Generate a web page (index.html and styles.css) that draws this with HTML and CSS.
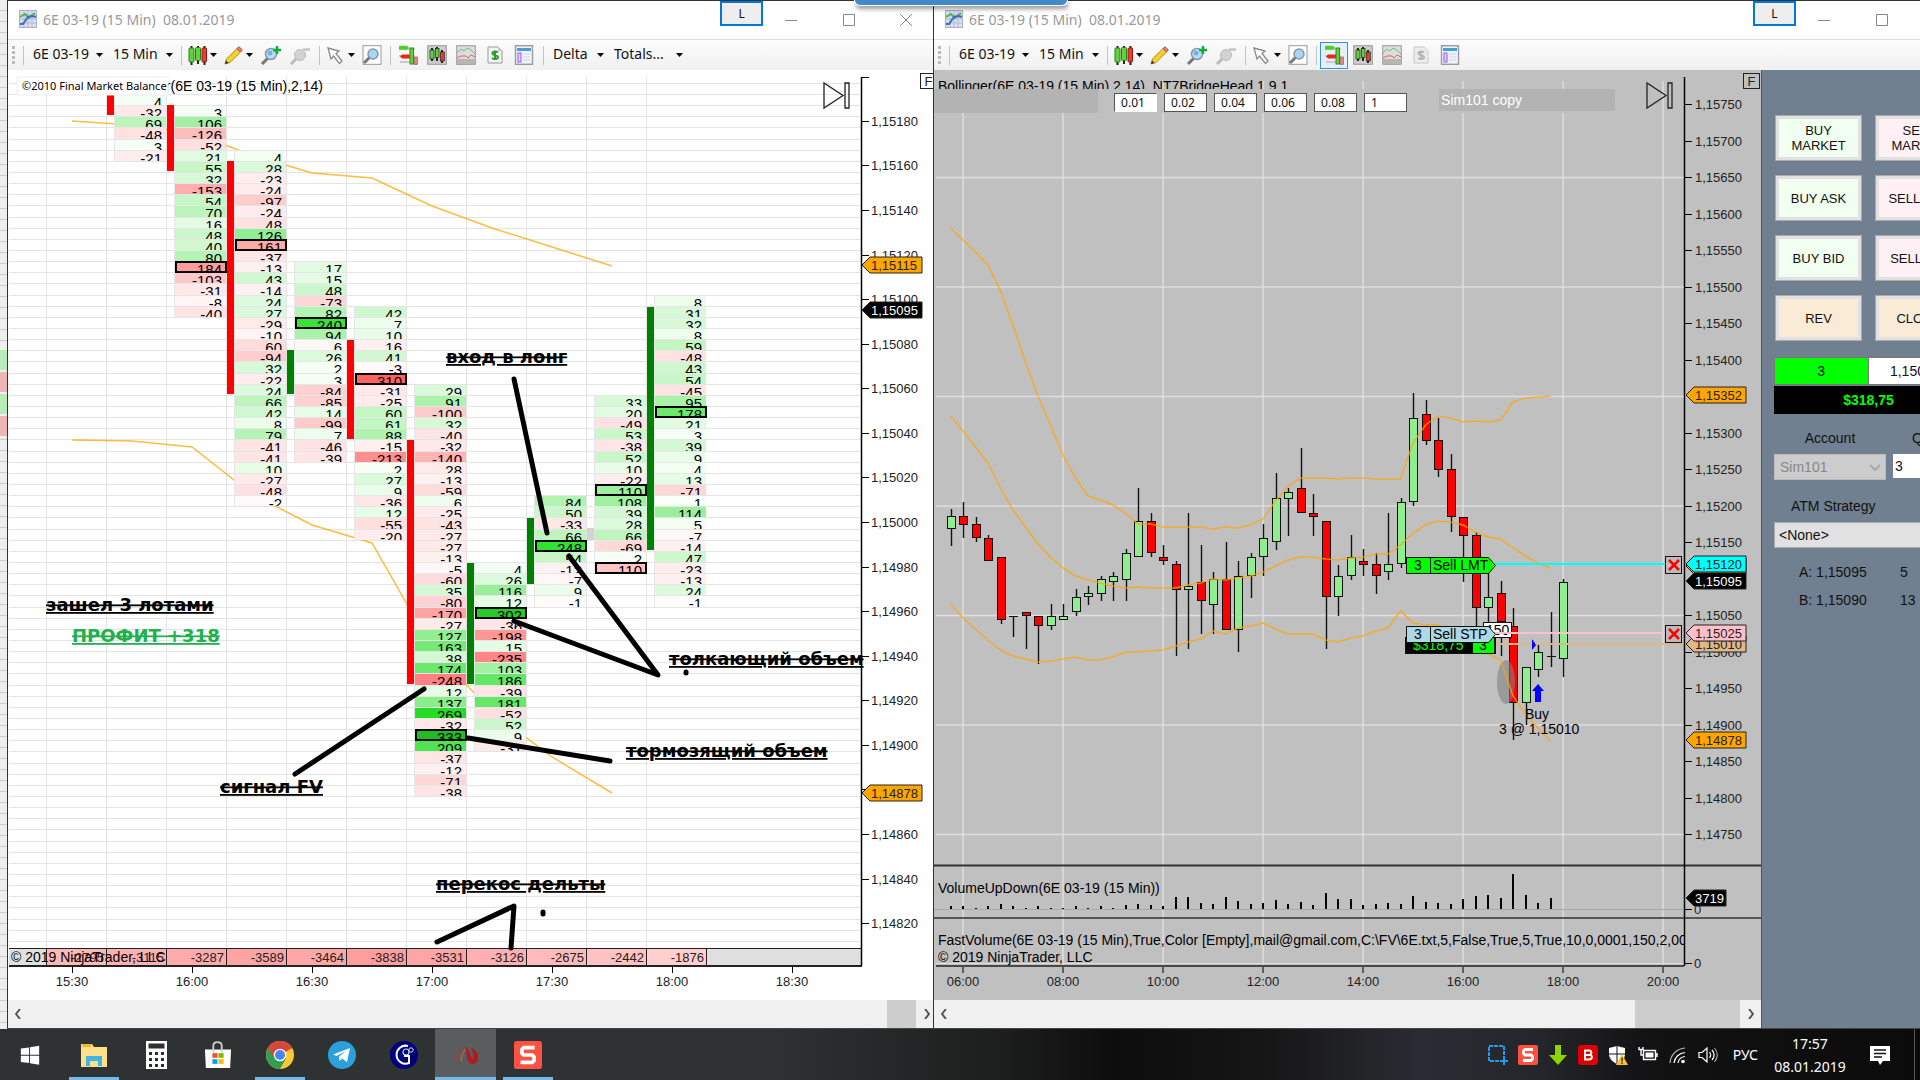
FILE: index.html
```html
<!DOCTYPE html>
<html lang="ru">
<head>
<meta charset="utf-8">
<title>6E 03-19 (15 Min)</title>
<link rel="stylesheet" href="styles.css">
</head>
<body>
<svg class="sprite" aria-hidden="true">
  <symbol id="i-app" viewBox="0 0 18 18"><rect x=".5" y=".5" width="17" height="17" fill="#dcdff0" stroke="#a9aecb"/><path d="M5 1v16M9 1v16M13 1v16M1 5h16M1 9h16M1 13h16" stroke="#b4b9d6"/><path d="M1 7l5-3 4 4 6-5" fill="none" stroke="#4cb848" stroke-width="2"/><path d="M1 14h3l5-7 4-1 4 1" fill="none" stroke="#3b6fc4" stroke-width="2"/></symbol>
  <symbol id="i-caret" viewBox="0 0 7 4"><path d="M0 0h7L3.500 4z" fill="#000"/></symbol>
  <symbol id="i-candles" viewBox="0 0 19 19"><path d="M3.500 0v19M10 0v18M16.500 0v19" stroke="#222" stroke-width="2"/><rect x="1" y="2" width="5" height="14" rx="1" fill="#5fd33a" stroke="#2b7d18"/><rect x="7.500" y="1.500" width="5" height="13" rx="1" fill="#5fd33a" stroke="#2b7d18"/><rect x="14" y="2" width="4.500" height="14" rx="1" fill="#ee3b34" stroke="#8f1712"/></symbol>
  <symbol id="i-pencil" viewBox="0 0 19 19"><path d="M1 18l1.500-5L13 2.500 16.500 6 6 16.500z" fill="#f7cf2e" stroke="#b58711"/><path d="M13 2.500L15 .8l3.300 3L16.500 6z" fill="#ef7d7d" stroke="#b54b4b"/><path d="M1 18l1-3.500L4.500 17z" fill="#333"/></symbol>
  <symbol id="i-lens" viewBox="0 0 22 20"><path d="M2 19l6-6" stroke="#777" stroke-width="3"/><circle cx="11" cy="9" r="5.500" fill="#b9dcf7" stroke="#8797a8" stroke-width="1.500"/><circle cx="10" cy="8" r="2.500" fill="#6fb2ea"/></symbol>
  <symbol id="i-zoomin" viewBox="0 0 22 20"><use href="#i-lens"/><path d="M17 1v8M13 5h8" stroke="#10b030" stroke-width="2.500"/></symbol>
  <symbol id="i-zoomout" viewBox="0 0 22 20"><path d="M2 19l6-6" stroke="#bbb" stroke-width="3"/><circle cx="11" cy="10" r="5.500" fill="#d2d2d2" stroke="#bdbdbd"/><path d="M14 4.500h7" stroke="#c4c4c4" stroke-width="2.500"/></symbol>
  <symbol id="i-cursor" viewBox="0 0 19 19"><path d="M2 2l11 3-3 2.500 6 7.500-2.500 2.500L7.500 10 5 13z" fill="#fff" stroke="#8a8a8a" stroke-width="1.300"/></symbol>
  <symbol id="i-zoombox" viewBox="0 0 20 20"><rect x="1" y=".7" width="18" height="18.600" fill="#fff" stroke="#999"/><path d="M2 18l6-6" stroke="#777" stroke-width="3"/><circle cx="11" cy="9" r="5" fill="#a8d4f6" stroke="#8797a8" stroke-width="1.500"/></symbol>
  <symbol id="i-dom" viewBox="0 0 20 20"><path d="M1 4h16M1 11h16M2 17h12" stroke="#c9c9c9" stroke-width="2"/><path d="M1 .8h8l2 2-2 2H1z" fill="#4fd124"/><path d="M4 9.500h8v4H4l-2-2z" fill="#e3281e"/><rect x="12" y="3" width="3.500" height="16" fill="#5fd33a" stroke="#3d8526"/><rect x="16.500" y="12" width="3" height="7.500" fill="#d98a82" stroke="#a6483f" stroke-width=".6"/></symbol>
  <symbol id="i-data" viewBox="0 0 20 20"><rect x=".7" y=".7" width="18.600" height="18.600" fill="#ccc" stroke="#999"/><path d="M5 3v13M10 2v14M15 5v13" stroke="#222" stroke-width="2"/><rect x="3" y="5" width="4" height="9" fill="#5fd33a" stroke="#222" stroke-width=".7"/><rect x="8.500" y="3.500" width="3.500" height="9" fill="#5fd33a" stroke="#222" stroke-width=".7"/><rect x="13.300" y="7" width="4" height="9" fill="#e63a30" stroke="#222" stroke-width=".7"/></symbol>
  <symbol id="i-ind" viewBox="0 0 20 20"><rect x=".7" y=".7" width="18.600" height="18.600" fill="#dcdcdc" stroke="#999"/><rect x="1" y="14" width="18" height="5" fill="#b5b5b5"/><path d="M1 8l4-4 3 2 3-3 4 2 4 4" fill="none" stroke="#69bf87"/><path d="M1 13l4-2 5 0 2 2 3-3 4 2" fill="none" stroke="#e0625c"/></symbol>
  <symbol id="i-money" viewBox="0 0 20 20"><path d="M3 2h10l4 4v12H3z" fill="#f4f4f4" stroke="#999"/><path d="M13 2v4h4z" fill="#ccc"/><path d="M13 7.500c-3-2-6-.5-5.500 1.200.5 2 5 1 5.500 3.300.4 2-3.500 3-6 1M10 5.500v9.500" fill="none" stroke="#2c9b28" stroke-width="2"/></symbol>
  <symbol id="i-money-off" viewBox="0 0 20 20"><path d="M3 2h10l4 4v12H3z" fill="#ececec" stroke="#c9c9c9"/><path d="M13 7.500c-3-2-6-.5-5.500 1.200.5 2 5 1 5.500 3.300.4 2-3.500 3-6 1M10 5.500v9.500" fill="none" stroke="#b5b5b5" stroke-width="2"/></symbol>
  <symbol id="i-props" viewBox="0 0 20 20"><rect x="1.500" y=".7" width="17" height="18.600" fill="#f1f3fb" stroke="#9a9aa6" stroke-width="1.400"/><rect x="3" y="3" width="14" height="3" fill="#4a9ed0"/><rect x="4" y="8" width="3" height="9" fill="#e4d3ff" stroke="#9457e8"/><path d="M9 9h7M9 12h7M9 15h7" stroke="#cdd2ec"/></symbol>
</svg>

<div class="screen">
<main class="desktop">
  <div class="behind" aria-hidden="true"><i class="g"></i><i class="r"></i><i class="g"></i><i class="r"></i></div>

  <section class="window window-a">
    <header class="titlebar">
      <svg class="app"><use href="#i-app"/></svg>
      <h1>6E 03-19 (15 Min)&nbsp; 08.01.2019</h1>
      <button class="link-btn">L</button>
      <button class="win-btn" aria-label="Minimize"><svg viewBox="0 0 12 12"><path d="M0 6.500h12"/></svg></button>
      <button class="win-btn" aria-label="Maximize"><svg viewBox="0 0 12 12"><path d="M.5.5h11v11H.5z"/></svg></button>
      <button class="win-btn" aria-label="Close"><svg viewBox="0 0 12 12"><path d="M0 0l12 12M12 0L0 12"/></svg></button>
    </header>
    <nav class="toolbar">
      <span class="grip"></span><span class="sep"></span>
      <label class="dd instr"><select aria-label="Instrument"><option>6E 03-19</option></select><svg class="caret"><use href="#i-caret"/></svg></label>
      <label class="dd period"><select aria-label="Period"><option>15 Min</option></select><svg class="caret"><use href="#i-caret"/></svg></label>
      <span class="sep"></span>
      <button class="tool" aria-label="Chart style"><svg class="ic"><use href="#i-candles"/></svg><svg class="caret"><use href="#i-caret"/></svg></button>
      <button class="tool" aria-label="Draw"><svg class="ic"><use href="#i-pencil"/></svg><svg class="caret"><use href="#i-caret"/></svg></button>
      <button class="tool wide" aria-label="Zoom in"><svg><use href="#i-zoomin"/></svg></button>
      <button class="tool wide" aria-label="Zoom out"><svg><use href="#i-zoomout"/></svg></button>
      <span class="sep"></span>
      <button class="tool" aria-label="Cursor"><svg class="ic"><use href="#i-cursor"/></svg><svg class="caret"><use href="#i-caret"/></svg></button>
      <button class="tool frame" aria-label="Zoom frame"><svg><use href="#i-zoombox"/></svg></button>
      <span class="sep"></span>
      <button class="tool wide" aria-label="Chart trader"><svg><use href="#i-dom"/></svg></button>
      <button class="tool wide" aria-label="Data series"><svg><use href="#i-data"/></svg></button>
      <button class="tool wide" aria-label="Indicators"><svg><use href="#i-ind"/></svg></button>
      <button class="tool wide" aria-label="Strategies"><svg><use href="#i-money"/></svg></button>
      <button class="tool wide" aria-label="Properties"><svg><use href="#i-props"/></svg></button>
      <span class="sep"></span>
      <label class="dd delta"><select aria-label="Mode"><option>Delta</option></select><svg class="caret"><use href="#i-caret"/></svg></label>
      <label class="dd totals"><select aria-label="Totals"><option>Totals...</option></select><svg class="caret"><use href="#i-caret"/></svg></label>
    </nav>
    <svg class="chart" id="footprint"></svg>
    <div class="scroll"><button aria-label="Scroll left"><svg viewBox="0 0 6 10"><path d="M5 0L1 5l4 5"/></svg></button><span class="thumb small"></span><button aria-label="Scroll right"><svg viewBox="0 0 6 10"><path d="M1 0l4 5-4 5"/></svg></button></div>
  </section>

  <section class="window window-b">
    <header class="titlebar">
      <svg class="app"><use href="#i-app"/></svg>
      <h1>6E 03-19 (15 Min)&nbsp; 08.01.2019</h1>
      <button class="link-btn">L</button>
      <button class="win-btn" aria-label="Minimize"><svg viewBox="0 0 12 12"><path d="M0 6.500h12"/></svg></button>
      <button class="win-btn" aria-label="Maximize"><svg viewBox="0 0 12 12"><path d="M.5.5h11v11H.5z"/></svg></button>
      <button class="win-btn" aria-label="Close"><svg viewBox="0 0 12 12"><path d="M0 0l12 12M12 0L0 12"/></svg></button>
    </header>
    <nav class="toolbar">
      <span class="grip"></span><span class="sep"></span>
      <label class="dd instr"><select aria-label="Instrument"><option>6E 03-19</option></select><svg class="caret"><use href="#i-caret"/></svg></label>
      <label class="dd period"><select aria-label="Period"><option>15 Min</option></select><svg class="caret"><use href="#i-caret"/></svg></label>
      <span class="sep"></span>
      <button class="tool" aria-label="Chart style"><svg class="ic"><use href="#i-candles"/></svg><svg class="caret"><use href="#i-caret"/></svg></button>
      <button class="tool" aria-label="Draw"><svg class="ic"><use href="#i-pencil"/></svg><svg class="caret"><use href="#i-caret"/></svg></button>
      <button class="tool wide" aria-label="Zoom in"><svg><use href="#i-zoomin"/></svg></button>
      <button class="tool wide" aria-label="Zoom out"><svg><use href="#i-zoomout"/></svg></button>
      <span class="sep"></span>
      <button class="tool" aria-label="Cursor"><svg class="ic"><use href="#i-cursor"/></svg><svg class="caret"><use href="#i-caret"/></svg></button>
      <button class="tool frame" aria-label="Zoom frame"><svg><use href="#i-zoombox"/></svg></button>
      <span class="sep"></span>
      <button class="tool wide on" aria-label="Chart trader"><svg><use href="#i-dom"/></svg></button>
      <button class="tool wide" aria-label="Data series"><svg><use href="#i-data"/></svg></button>
      <button class="tool wide" aria-label="Indicators"><svg><use href="#i-ind"/></svg></button>
      <button class="tool wide" aria-label="Strategies"><svg><use href="#i-money-off"/></svg></button>
      <button class="tool wide" aria-label="Properties"><svg><use href="#i-props"/></svg></button>
    </nav>
    <div class="split">
      <div class="pane">
        <svg class="chart" id="candles"></svg>
        <div class="lots">
          <input value="0.01" class="cur" aria-label="Lot 1"><input value="0.02" aria-label="Lot 2"><input value="0.04" aria-label="Lot 3"><input value="0.06" aria-label="Lot 4"><input value="0.08" aria-label="Lot 5"><input value="1" aria-label="Lot 6">
          <span class="copy">Sim101 copy</span>
        </div>
        <div class="scroll"><button aria-label="Scroll left"><svg viewBox="0 0 6 10"><path d="M5 0L1 5l4 5"/></svg></button><span class="thumb"></span><button aria-label="Scroll right"><svg viewBox="0 0 6 10"><path d="M1 0l4 5-4 5"/></svg></button></div>
      </div>
      <aside class="trader">
        <div class="orders">
          <button class="buy">BUY<br>MARKET</button><button class="sell">SELL<br>MARKET</button>
          <button class="buy">BUY ASK</button><button class="sell">SELL ASK</button>
          <button class="buy">BUY BID</button><button class="sell">SELL BID</button>
          <button class="flat">REV</button><button class="flat">CLOSE</button>
        </div>
        <div class="position"><span class="qty">3</span><span class="avg">1,15010</span></div>
        <div class="pnl">$318,75</div>
        <div class="fields">
          <label for="acc">Account</label><label for="qty">Qty</label>
          <span class="acc"><select id="acc" disabled><option>Sim101</option></select><svg viewBox="0 0 12 7"><path d="M1 1l5 5 5-5"/></svg></span>
          <input id="qty" value="3">
        </div>
        <label class="atm-label" for="atm">ATM Strategy</label>
        <select id="atm" class="atm"><option>&lt;None&gt;</option></select>
        <dl class="quotes"><dt>A: 1,15095</dt><dd>5</dd><dt>B: 1,15090</dt><dd>13</dd></dl>
      </aside>
    </div>
  </section>
  <div class="notch"></div>
</main>

<footer class="taskbar">
  <div class="apps">
    <button aria-label="Start"><svg viewBox="0 0 24 24"><path d="M2 5l9-1.300v8H2zM12 3.500L22 2v9.700H12zM2 12.700h9v8L2 19.500zM12 12.700h10V22.500l-10-1.400z" fill="#fff"/></svg></button>
    <button class="run" aria-label="Explorer"><svg viewBox="0 0 28 28"><path d="M1 3h11l2 3h13v20H1z" fill="#ffe08a"/><path d="M2 3h9v3H2z" fill="#f3b92d"/><path d="M6 25V15h16v10h-4v-5h-8v5z" fill="#3fb4e8"/></svg></button>
    <button aria-label="Calculator"><svg viewBox="0 0 28 28"><path d="M4 0h21v28H4z" fill="#fff"/><path d="M6.500 2.500h16v5h-16zM7 11h3v3H7zM13 11h3v3h-3zM19 11h3v3h-3zM7 17h3v3H7zM13 17h3v3h-3zM19 17h3v3h-3zM7 23h3v3H7zM13 23h3v3h-3zM19 23h3v3h-3z" fill="#2c2f30"/></svg></button>
    <button aria-label="Store"><svg viewBox="0 0 30 30"><path d="M1 9h28l-1 20H2z" fill="#fff"/><path d="M10 12V5c0-5 9-5 9 0v7" fill="none" stroke="#ccc" stroke-width="2"/><path d="M9 13h5.500v5H9z" fill="#f25022"/><path d="M15.500 13H21v5h-5.500z" fill="#7fba00"/><path d="M9 19.500h5.500v5H9z" fill="#00a4ef"/><path d="M15.500 19.500H21v5h-5.500z" fill="#ffb900"/></svg></button>
    <button class="run" aria-label="Chrome"><svg viewBox="0 0 28 28"><circle cx="14" cy="14" r="14" fill="#fcc934"/><path d="M14 14L1.900 7a14 14 0 0 1 24.200 0z" fill="#d8453a"/><path d="M14 14L1.900 7A14 14 0 0 0 14 28l6-10.500z" fill="#2f9e4f"/><path d="M14 7h12a14 14 0 0 0-24.200 0l6 10z" fill="#d8453a"/><circle cx="14" cy="14" r="6.300" fill="#fff"/><circle cx="14" cy="14" r="5" fill="#4a86ee"/></svg></button>
    <button aria-label="Telegram"><svg viewBox="0 0 28 28"><circle cx="14" cy="14" r="14" fill="#2ba0dc"/><path d="M5 13.500L22 7l-3 14-5-3.500-2.500 2.500-.5-4.500L18 10l-9.500 5z" fill="#fff"/></svg></button>
    <button aria-label="G"><svg viewBox="0 0 28 28"><circle cx="14" cy="14" r="14" fill="#00007e"/><path d="M18 5a9 9 0 1 0 1 17v-7h-5" fill="none" stroke="#fff" stroke-width="2"/><circle cx="16" cy="11" r="3" fill="none" stroke="#cdd" stroke-width="1.200"/><circle cx="21" cy="9" r="2.200" fill="none" stroke="#cdd"/></svg></button>
    <button class="run active" aria-label="NinjaTrader"><svg viewBox="0 0 28 28"><path d="M2 19C2 10 7 5 13 5c-4 3-6 9-5 15-2 2-5 2-6-1z" fill="#75534c"/><path d="M8 20c1-6 3-11 6-14l-1 4c-2 3-3 7-3 11z" fill="#8f6a5f"/><path d="M13 5c4 3 5 9 8 14 1-4 0-9-2-12 5 1 8 7 7 12-1 3-4 5-7 4-5-3-4-11-6-18z" fill="#b3191e"/></svg></button>
    <button class="run" aria-label="Snagit"><svg viewBox="0 0 30 30"><rect width="30" height="30" rx="3" fill="#fb5243"/><path d="M22 7H10.500L8.500 9v4l2 2h9l2 2v4l-2 2H7" fill="none" stroke="#fff" stroke-width="4"/></svg></button>
  </div>
  <div class="tray">
    <svg viewBox="0 0 20 20"><path d="M1 1h15v15H1z" fill="none" stroke="#1f9cf0" stroke-width="2" stroke-dasharray="4 1"/><path d="M16 12v8M12 16h8" stroke="#1f9cf0" stroke-width="2"/></svg>
    <svg viewBox="0 0 20 20"><rect width="20" height="20" rx="2" fill="#fb5243"/><path d="M15 4.500H7L5.500 6v2.500L7 10h6l1.500 1.500V14L13 15.500H5" fill="none" stroke="#fff" stroke-width="2.800"/></svg>
    <svg viewBox="0 0 20 20"><path d="M7 0h6v10h6l-9 10-9-10h6z" fill="#8fd400"/></svg>
    <svg viewBox="0 0 20 20"><rect width="20" height="20" rx="3" fill="#dc0000"/><path d="M7 5.500h4c3 0 3 4 .5 4.200C15 10 14.500 14.500 11 14.500H7zM7 10h5" fill="none" stroke="#fff" stroke-width="2"/></svg>
    <svg viewBox="0 0 20 20"><path d="M9 1l8 2v6c0 5-4 8-8 10-4-2-8-5-8-10V3z" fill="#fff"/><path d="M9 1v18M1 9h16" stroke="#111"/><path d="M14 9l6 11H8z" fill="#fbc02d"/><path d="M14 12.500v4M14 17.500v1.500" stroke="#222" stroke-width="1.300"/></svg>
    <svg viewBox="0 0 20 20"><path d="M5.500 5.500h12v9h-12zM19 8v4M1 2v2.500h4V2M3 5v5h2" fill="none" stroke="#fff" stroke-width="1.400"/><path d="M7.500 7.500h8v5h-8z" fill="#fff"/></svg>
    <svg viewBox="0 0 20 20"><g fill="none" stroke="#fff" stroke-width="1.200"><path d="M2 18A16 16 0 0 1 17 3" opacity=".7"/><path d="M6 18A12 12 0 0 1 17 7.500M10 18a8 8 0 0 1 7-6.500"/></g><circle cx="15" cy="16.500" r="1.800" fill="#fff"/></svg>
    <svg viewBox="0 0 20 20"><g fill="none" stroke="#fff" stroke-width="1.200"><path d="M1 7.500h3L9 3v14l-5-4.500H1zM11.500 7c1.500 2 1.500 4 0 6M14 5c2.500 3 2.500 7 0 10"/><path d="M16.500 3c4 5 4 9 0 14" opacity=".6"/></g></svg>
    <span class="lang">РУС</span>
    <time class="clock">17:57<br>08.01.2019</time>
    <svg class="note" viewBox="0 0 20 20"><path d="M0 1h20v15h-7l-3 4-2-4H0z" fill="#fff"/><path d="M4 5h12M4 8.500h12M4 12h8" stroke="#111" stroke-width="1.400"/></svg>
    <span class="peek"></span>
  </div>
</footer>
</div>
<script src="charts.js"></script>
</body>
</html>
```
FILE: styles.css
```css
* { box-sizing: border-box; }
body { margin: 0; font-family: "Noto Sans", "Open Sans", sans-serif; color: #111; overflow: hidden; }
button, input, select { font: inherit; color: inherit; margin: 0; padding: 0; border: 0; border-radius: 0; background: none; outline: 0; }
select { appearance: none; opacity: 1; }
h1, dl, dd { margin: 0; }
svg { display: block; flex: none; }
.sprite { position: absolute; width: 0; height: 0; }

.screen { display: flex; flex-direction: column; min-height: 100vh; }
.desktop { position: relative; flex: 1; display: flex; overflow: hidden; background: #fff; }
.behind { flex: 0 0 7px; display: flex; flex-direction: column; gap: 2px; padding-top: 350px; background: repeating-linear-gradient(#eee 0 10px, #ccc 10px 11px); }
.behind i { height: 20px; }
.behind .g { background: #b8ecb8; }
.behind .r { background: #f0b4b4; }

.window { display: flex; flex-direction: column; min-width: 0; border-left: 1px solid #333; border-top: 1px solid #333; border-bottom: 1px solid #444; background: #fff; }
.window-a { flex: 926 1 0; }
.window-b { flex: 1033 1 0; margin-right: -46px; }
.notch { position: absolute; top: 0; left: 50%; width: 214px; height: 6px; margin-left: -106px; border: solid #fff; border-width: 0 1px 1px; border-radius: 0 0 6px 6px; background: #4189c7; box-shadow: 1px 3px 4px #0006; }

.titlebar { display: flex; height: 38px; padding-left: 11px; }
.titlebar .app { width: 18px; height: 18px; margin-top: 9px; }
.titlebar h1 { flex: 1; margin-left: 6px; font: 14px/37px "Noto Sans", sans-serif; color: #999; white-space: nowrap; }
.link-btn { width: 43px; height: 25px; border: 2px solid #0078d7; background: #eee; font-size: 12px; line-height: 20px; }
.win-btn { width: 60px; display: flex; justify-content: center; padding-top: 13px; }
.win-btn:last-child { width: 54px; }
.link-btn + .win-btn { width: 56px; }
.win-btn svg { width: 12px; height: 12px; fill: none; stroke: #888; }

.toolbar { display: flex; align-items: center; gap: 7px; height: 31px; padding-left: 4px; border-top: 1px solid #ddd; background: linear-gradient(#fcfcfc, #f0f0f0); }
.grip { width: 3px; height: 18px; background: repeating-linear-gradient(#bbb 0 3px, transparent 3px 5px); }
.sep { width: 1px; height: 19px; margin: 0 -1px 0 1px; background: #c4c4c4; }
.dd { display: flex; align-items: center; padding-left: 3px; font-size: 14px; }
.dd select { flex: 1; min-width: 0; line-height: 20px; padding-bottom: 2px; }
.instr { width: 73px; }
.period { width: 63px; }
.delta { width: 54px; }
.totals { width: 72px; }
.caret { width: 7px; height: 4px; }
.tool { display: flex; align-items: center; gap: 3px; height: 27px; }
.tool .ic { width: 19px; height: 19px; }
.tool.wide svg { width: 22px; height: 20px; }
.tool.frame svg { width: 20px; height: 20px; }
.tool.on { width: 28px; margin: 0 -3px; justify-content: center; border: 1px solid #3393df; background: #e3f0fb; }

.chart { flex: 1; width: 100%; min-height: 930px; overflow: hidden; font-family: "Liberation Sans", Arial, sans-serif; font-size: 14px; }
.axis-text { font-size: 13px; fill: #222; }
.cell-text { font-size: 15px; }
.mark { font: bold 18px "DejaVu Sans", sans-serif; text-decoration: underline line-through; }
.caption { font: 11px "Noto Sans", sans-serif; }

.scroll { display: flex; align-items: center; height: 28px; padding: 0 3px 0 7px; background: #f0f0f0; }
.scroll button svg { width: 6px; height: 10px; fill: none; stroke: #555; stroke-width: 2; }
.thumb { width: 105px; height: 28px; margin: 0 8px 0 auto; background: #cdcdcd; }
.thumb.small { width: 29px; }
.pane .scroll { padding-right: 7px; }

.split { flex: 1; display: flex; }
.pane { position: relative; flex: 1; min-width: 0; display: flex; flex-direction: column; background: #c0c0c0; }
.lots { position: absolute; top: 19px; left: 0; right: 135px; display: flex; gap: 7px; padding: 4px 0 0 180px; height: 24px; background: linear-gradient(90deg, #b3b3b3 164px, #c0c0c0 164px); font: 12px "Noto Sans", sans-serif; }
.lots input { width: 43px; height: 19px; padding-left: 6px; border: 1px solid #555; background: #fff; line-height: 16px; }
.lots .cur { border-color: #555 #fff #fff #555; }
.copy { flex: 0 0 176px; margin: -4px 0 0 25px; height: 22px; padding-left: 2px; background: #b3b3b3; color: #fff; font: 14px/22px "Liberation Sans", sans-serif; }

.trader { flex: 0 0 204px; display: flex; flex-direction: column; padding: 45px 3px 0 12px; border-left: 1px solid #555; background: #708090; font: 14px "Liberation Sans", sans-serif; }
.orders { display: grid; grid-template-columns: 87px 87px; gap: 14px 13px; padding-left: 1px; font-size: 13px; }
.orders button { height: 46px; border: 1px solid #aaa; box-shadow: inset 0 0 0 3px #e1e1e1; line-height: 15px; }
.buy { background: #f0fff0; }
.sell { background: #fff0f5; }
.flat { background: #faebd7; }
.position { display: grid; grid-template-columns: 1fr 1fr; margin-top: 16px; border: 1px solid #777; line-height: 26px; text-align: center; }
.qty { background: #0f0; border-right: 1px solid #777; }
.avg { background: #fff; }
.pnl { margin-top: 1px; background: #000; color: #0f0; font-weight: bold; line-height: 28px; text-align: center; }
.fields { display: grid; grid-template-columns: 112px 70px; gap: 7px 7px; margin-top: 16px; line-height: 17px; text-align: center; }
.fields label:nth-child(2) { text-align: left; padding-left: 19px; }
.acc { position: relative; display: flex; height: 26px; }
.acc select { width: 112px; padding-left: 5px; border: 1px solid #bbb; background: #ccc; color: #888; }
.acc svg { position: absolute; right: 5px; top: 10px; width: 12px; height: 7px; fill: none; stroke: #aaa; stroke-width: 2; }
.fields input { width: 70px; height: 24px; padding-left: 2px; background: #fff; }
.atm-label { margin: 18px 0 0 17px; line-height: 17px; }
.atm { height: 26px; margin-top: 7px; padding-left: 4px; border: 1px solid #aaa; background: #e1e1e1; }
.quotes { display: grid; grid-template-columns: 101px 1fr; row-gap: 11px; margin: 16px 0 0 25px; line-height: 17px; }

.taskbar { display: flex; justify-content: space-between; height: 51px; background: linear-gradient(90deg, #2e3233 0 40%, #1d1e1e 52%, #0e0d0e 58%, #161617 66%, #2b2c33 74%, #25262b 80%, #121213 86%, #0b0b0b); color: #fff; }
.apps { display: flex; padding-left: 6px; gap: 12px; }
.apps button { width: 50px; display: flex; align-items: center; justify-content: center; border-bottom: 3px solid transparent; border-top: 3px solid transparent; }
.apps .run { border-bottom-color: #76b9ed; }
.apps .active { width: 61px; margin: 0 -5px 0 -6px; border-top-color: #5a5d5f; background: #5a5d5f; }
.apps svg { width: 28px; height: 28px; }
.apps button:first-child { width: 48px; margin-right: 3px; }
.apps button:first-child svg { width: 22px; height: 22px; }
.tray { display: flex; align-items: center; gap: 10px; }
.tray svg { width: 20px; height: 20px; }
.lang { margin-left: 5px; font-size: 14px; }
.clock { width: 84px; font-size: 14px; line-height: 23px; text-align: center; }
.tray .note { margin-left: 8px; }
.peek { width: 6px; height: 51px; margin-left: 14px; border-left: 1px solid #555; }
```
FILE: charts.js
```js
const NS = 'http://www.w3.org/2000/svg';

function el(parent, tag, attrs, text) {
  const n = document.createElementNS(NS, tag);
  for (const k in attrs) n.setAttribute(k, attrs[k]);
  if (text !== undefined) n.textContent = text;
  parent.appendChild(n);
  return n;
}
const rect = (g, x, y, w, h, fill, extra) => el(g, 'rect', Object.assign({ x, y, width: w, height: h, fill }, extra));
const line = (g, x1, y1, x2, y2, stroke, width) => el(g, 'path', { d: `M${x1} ${y1}L${x2} ${y2}`, stroke, 'stroke-width': width || 1, fill: 'none' });
const curve = (g, pts) => el(g, 'polyline', { points: pts, fill: 'none', stroke: '#ffa500', 'stroke-width': 1.5, opacity: 0.75 });
const label = (g, x, y, t, cls, extra) => el(g, 'text', Object.assign({ x, y, class: cls || '' }, extra), t);

function mix(stops, v) {
  for (let i = 1; i < stops.length; i++) {
    const [a, ca] = stops[i - 1], [b, cb] = stops[i];
    if (v <= b || i === stops.length - 1) {
      const t = Math.min(1, (v - a) / (b - a));
      return `rgb(${ca.map((c, k) => Math.round(c + (cb[k] - c) * t))})`;
    }
  }
}
const UP = [[0, [250, 255, 250]], [10, [232, 252, 232]], [126, [146, 238, 146]], [260, [40, 224, 40]], [340, [32, 184, 32]]];
const DOWN = [[0, [255, 252, 252]], [13, [255, 240, 240]], [48, [255, 225, 225]], [100, [255, 202, 202]], [200, [255, 148, 148]], [250, [255, 128, 128]]];

function tag(g, x, y, w, text, fill, color) {
  el(g, 'path', { d: `M${x} ${y}l8 -8h${w - 8}v16h-${w - 8}z`, fill, stroke: '#222' });
  if (text) label(g, x + 9, y + 5, text, 'axis-text', { style: `fill:${color}` });
}
function skip(g, x, y) {
  el(g, 'path', { d: `M${x} ${y}v25l19 -12.500zM${x + 21} ${y}h4v25h-4z`, fill: 'none', stroke: '#222', 'stroke-width': 1.3 });
}
function corner(g, x, y) {
  rect(g, x, y, 16, 15, 'none', { stroke: '#222' });
  label(g, x + 4, y + 12, 'F', 'axis-text');
}

/* Footprint chart: start row, bar [top, bottom, colour], cells top to bottom.
   "~" marks a negative delta shown unsigned, "[ ]" the row of highest volume. */
const COLUMNS = [
  [0, [95, 115, 'red'], '4 -32 69 -48 3 -21'],
  [1, [105, 171, 'red'], '3 106 -126 -52 21 55 32 -153 54 70 16 48 40 80 [~184] -103 -31 -8 -40'],
  [5, [161, 394, 'red'], '4 28 -23 -24 -97 -24 ~48 126 [~161] -37 -13 43 -14 24 27 -29 -10 ~60 -94 32 -22 24 66 42 8 79 -41 -41 10 -27 -48 -2'],
  [15, [350, 394, 'green'], '17 15 48 -73 82 [240] 94 ~6 26 2 3 -84 -85 14 -99 7 -46 -39'],
  [19, [340, 439, 'red'], '42 7 10 ~16 41 -3 [~310] -31 -25 60 61 88 -15 -213 2 27 9 -36 12 -55 -20'],
  [26, [440, 684, 'red'], '29 91 -100 32 -40 -32 -140 ~28 -13 -59 6 -25 -43 -27 -27 -13 -5 -60 35 -80 -170 -27 127 163 38 174 -248 12 137 269 -32 [333] 209 -37 -12 -71 -38'],
  [42, [563, 684, 'green'], '4 26 116 12 [302] -36 -198 15 -235 103 186 -39 181 -52 52 9 -31'],
  [36, [518, 584, 'green'], '84 50 -33 66 [248] 54 -12 -7 9 -1'],
  [27, null, '33 20 -49 53 -38 52 10 -22 [110] 108 39 28 66 -69 2 [~110]'],
  [18, [307, 550, 'green'], '8 31 32 8 59 -48 43 54 -45 95 [178] 21 3 39 9 4 13 -71 1 114 5 -7 -14 47 -23 -13 24 -1']
];
const TOTALS = ['-2795', '-3115', '-3287', '-3589', '-3464', '-3838', '-3531', '-3126', '-2675', '-2442', '-1876'];
const rowY = k => Math.round(94 + 11.143 * k);

(function footprint() {
  const svg = document.getElementById('footprint');
  const g = el(svg, 'g', { transform: 'translate(-8,-70)' });
  for (let k = -1; k < 77; k++) line(g, 9, rowY(k) + 0.5, 861, rowY(k) + 0.5, '#e4e4e4');
  for (let i = 0; i < 11; i++) line(g, 46.5 + 60 * i, 77, 46.5 + 60 * i, 948, '#e4e4e4');
  curve(g, '72,121 132,125 192,133 252,155 312,173 372,178 432,206 492,228 552,247 612,266');
  curve(g, '72,440 132,441 192,447 252,494 312,525 372,543 432,648 492,712 552,757 612,793');

  COLUMNS.forEach(([start, bar, cells], c) => {
    const x = 115 + 60 * c;
    if (bar) rect(g, x - 8, bar[0], 8, bar[1] - bar[0], bar[2]);
    const list = cells.split(' ');
    const boxes = [];
    list.forEach((raw, i) => {
      const boxed = raw[0] === '[';
      const v = raw.replace(/[\[\]]/g, '');
      const down = v[0] === '-' || v[0] === '~';
      const n = Math.abs(parseInt(v.replace('~', ''), 10));
      const y = rowY(start + i), h = rowY(start + i + 1) - y;
      rect(g, x - 1, y, 52, h, '#e6e6e6');
      let fill = mix(down ? DOWN : UP, n);
      if (n === 310) fill = '#ff6060';
      rect(g, x, y + 1, 51, h - 1, fill);
      const cell = el(g, 'svg', { x, y: y + 1, width: 51, height: h - 1 });
      label(cell, 47, 13, v.replace('~', ''), 'cell-text', { 'text-anchor': 'end' });
      if (boxed) boxes.push([y, h]);
    });
    boxes.forEach(([y, h]) => rect(g, x + 1, y + 1, 50, h - 1, 'none', { stroke: '#000', 'stroke-width': 2 }));
  });
  rect(g, 587, 528, 7, 12, '#d3d3d3');

  rect(g, 9, 948, 852, 18, '#e0e0e0');
  TOTALS.forEach((t, i) => {
    rect(g, 46.5 + 60 * i, 948.5, 60, 17, mix(DOWN, Math.abs(+t) / 21), { stroke: '#222' });
    label(g, 104 + 60 * i, 962, t, 'axis-text', { 'text-anchor': 'end' });
  });
  label(g, 11, 962, '© 2019 NinjaTrader, LLC');
  line(g, 9, 948.5, 861, 948.5, '#222');
  line(g, 9, 966, 862, 966, '#222', 2);
  line(g, 861.5, 77, 861.5, 966, '#000', 1.5);
  line(g, 861, 77.5, 869, 77.5, '#000');
  for (let p = 15180; p >= 14820; p -= 20) {
    const y = Math.round(522 + (15000 - p) * 2.2287);
    line(g, 862, y + 0.5, 869, y + 0.5, '#000');
    label(g, 871, y + 5, '1,' + p, 'axis-text');
  }
  ['15:30', '16:00', '16:30', '17:00', '17:30', '18:00', '18:30'].forEach((t, i) => {
    line(g, 72.5 + 120 * i, 967, 72.5 + 120 * i, 973, '#000');
    label(g, 72 + 120 * i, 986, t, 'axis-text', { 'text-anchor': 'middle' });
  });
  tag(g, 862, 265, 60, '1,15115', '#ffa500', '#222');
  tag(g, 862, 310, 60, '1,15095', '#000', '#fff');
  tag(g, 862, 793, 60, '1,14878', '#ffa500', '#222');
  skip(g, 824, 83);
  corner(g, 920.5, 73.5);
  label(g, 323, 91, 'Bollinger(6E 03-19 (15 Min),2,14)', '', { 'text-anchor': 'end' });
  rect(g, 17, 77, 151, 18, '#fff', { stroke: '#eee' });
  label(g, 22, 90, '©2010 Final Market Balance', 'caption');

  const pen = d => el(g, 'path', { d, fill: 'none', stroke: '#000', 'stroke-width': 5, 'stroke-linecap': 'round', 'stroke-linejoin': 'round' });
  pen('M514 379L547 533');
  pen('M569 556L658 675L514 621');
  pen('M468 738L610 761');
  pen('M424 689L295 774');
  pen('M437 942L514 906L511 948');
  pen('M686 672v1');
  pen('M543 912v2');
  [[446, 363, 'вход в лонг'], [669, 665, 'толкающий объем'], [626, 757, 'тормозящий объем'], [220, 793, 'сигнал FV'], [436, 890, 'перекос дельты'], [46, 611, 'зашел 3 лотами']]
    .forEach(([x, y, t]) => label(g, x, y, t, 'mark'));
  label(g, 72, 642, 'ПРОФИТ +318', 'mark', { fill: '#22b14c' });
})();

/* Candles: body top, body bottom, wick top, wick bottom in thirds of a pixel below y = 380, then direction. */
const CANDLES = `409 446 388 498 g|409 434 365 475 r|433 475 410 487 r|474 542 466 542 r|531 719 531 731 r|707 708 707 772 d
695 708 695 806 r|707 738 707 851 r|707 738 673 749 g|707 719 673 719 g|651 697 628 708 g|640 652 617 674 g|598 641 587 663 g
587 607 575 663 g|519 599 508 663 g|422 531 323 531 g|422 520 399 531 r|531 542 496 554 r|553 629 542 829 r|617 629 399 806 g
607 663 496 762 r|598 674 575 762 g|598 749 485 749 r|587 749 542 817 g|531 587 519 653 g|474 531 433 587 g|354 487 279 510 g
335 356 323 468 g|324 400 204 400 r|400 411 343 468 r|422 652 422 806 r|587 652 554 708 g|531 587 466 599 g|542 554 508 587 r
553 587 519 641 r|553 577 399 600 g|366 553 354 565 g|115 366 38 378 g|103 183 61 194 r|181 269 115 292 r|268 411 222 457 r
410 467 410 607 r|466 685 457 739 r|651 685 560 739 g|640 726 604 828 r|737 970 683 1080 r|860 970 860 1035 g|815 869 795 892 g
827 828 695 862 d|605 838 597 892 g`.split(/[|\n]/).map(s => s.trim().split(' '));
const UPPER = [228, 240, 252, 265, 291, 325, 362, 396, 425, 455, 478, 496, 500, 505, 513, 524, 524, 527, 527, 527, 527, 529, 527, 528, 525, 519, 501, 486, 478, 478, 478, 479, 478, 478, 479, 479, 479, 443, 425, 416, 418, 422, 421, 422, 420, 402, 398, 397, 396];
const MIDDLE = [416, 431, 447, 463, 488, 510, 527, 544, 557, 568, 576, 580, 583, 586, 588, 587, 588, 588, 588, 585, 583, 579, 580, 578, 576, 572, 566, 560, 557, 557, 559, 560, 558, 557, 554, 554, 545, 533, 525, 521, 522, 525, 532, 537, 539, 548, 556, 563, 568];
const LOWER = [604, 618, 629, 640, 650, 656, 659, 662, 661, 659, 657, 660, 660, 657, 652, 652, 651, 650, 646, 642, 639, 631, 634, 628, 626, 623, 629, 634, 634, 634, 640, 642, 638, 636, 631, 628, 611, 623, 625, 625, 630, 637, 645, 654, 660, 696, 714, 728, 741];
const VOLUME = [3, 3, 1, 3, 5, 3, 1, 3, 1, 1, 3, 1, 3, 1, 4, 5, 4, 3, 12, 12, 6, 5, 12, 8, 5, 6, 9, 5, 7, 4, 16, 10, 10, 4, 5, 6, 5, 13, 7, 6, 5, 10, 13, 14, 11, 35, 14, 6, 11];

(function candles() {
  const svg = document.getElementById('candles');
  const g = el(svg, 'g', { transform: 'translate(-934,-70)' });
  const X = i => 950.5 + 12.5 * i;
  for (let i = 0; i < 8; i++) line(g, 963 + 100 * i, 81, 963 + 100 * i, 965, '#dedede', 1.5);
  for (let p = 15650; p >= 14750; p -= 150) line(g, 936, 506 + (15200 - p) * 0.73, 1684, 506 + (15200 - p) * 0.73, '#dedede', 1.5);

  const dot = (s, i) => `${X(i)},${s}`;
  CANDLES.forEach(([t, b, wt, wb, dir], i) => {
    const x = Math.round(X(i)), y = v => Math.round(380 + v / 3);
    line(g, x + 0.5, y(wt), x + 0.5, y(wb), '#111', 1.4);
    if (dir === 'd') line(g, x - 4, y(t) + 0.5, x + 5, y(t) + 0.5, '#111');
    else rect(g, x - 3.5, y(t) + 0.5, 8, Math.max(3, y(b) - y(t) - 1), dir === 'g' ? '#90ee90' : '#f00', { stroke: '#111' });
  });
  el(g, 'ellipse', { cx: 1506, cy: 682, rx: 9, ry: 22, fill: '#808080', opacity: 0.6 });
  [UPPER, MIDDLE, LOWER].forEach(s => curve(g, s.map(dot).join(' ')));

  rect(g, 1483.5, 622.5, 28, 15, '#fff', { stroke: '#111' });
  label(g, 1486, 635, '150');
  line(g, 1495, 644, 1684, 644, '#deb887', 2);
  line(g, 1495, 564, 1666, 564, '#0ff', 2);
  line(g, 1495, 633, 1666, 633, '#ffc0cb', 2);
  rect(g, 1405.500, 637.5, 90, 16, '#000', { stroke: '#111' });
  rect(g, 1472.5, 637.5, 22, 16, '#0f0', { stroke: '#111' });
  label(g, 1413, 650, '$318,75', '', { fill: '#0f0' });
  label(g, 1479, 650, '3');
  [[557, '#0f0', 'Sell LMT'], [626, '#add8e6', 'Sell STP']].forEach(([y, fill, t]) => {
    el(g, 'path', { d: `M1406.500 ${y + 0.5}h82l7 8 -7 8h-82zM1430.500 ${y + 0.5}v16`, fill, stroke: '#111' });
    label(g, 1414, y + 13, '3');
    label(g, 1433, y + 13, t);
    rect(g, 1665.5, y - 0.5, 16, 17, '#bbb', { stroke: '#111' });
    el(g, 'path', { d: `M1669 ${y + 3}l10 10m0 -10l-10 10`, stroke: '#f00', 'stroke-width': 2.5 });
  });
  el(g, 'path', { d: 'M1538 684l6 7h-3v11h-6v-11h-3zM1532 639l4 6 -4 5z', fill: '#00f' });
  label(g, 1525, 719, 'Buy');
  label(g, 1499, 734, '3 @ 1,15010');

  line(g, 934, 865.5, 1761, 865.5, '#333', 2);
  line(g, 934, 918, 1761, 918, '#333', 1.5);
  line(g, 934, 909.5, 1684, 909.5, '#a8a8a8');
  line(g, 936, 963.5, 1684, 963.5, '#dedede');
  line(g, 936, 966, 1684, 966, '#222', 1.5);
  VOLUME.forEach((v, i) => rect(g, Math.round(X(i)) - 1, 909 - v, 2, v, '#000'));
  label(g, 938, 893, 'VolumeUpDown(6E 03-19 (15 Min))');
  const fv = el(g, 'svg', { x: 936, y: 930, width: 748, height: 24 });
  label(fv, 2, 15, 'FastVolume(6E 03-19 (15 Min),True,Color [Empty],mail@gmail.com,C:\\FV\\6E.txt,5,False,True,5,True,10,0,0001,150,2,00:');
  label(g, 938, 962, '© 2019 NinjaTrader, LLC');
  const head = el(g, 'svg', { x: 936, y: 76, width: 748, height: 13 });
  label(head, 2, 15, 'Bollinger(6E 03-19 (15 Min),2,14), NT7BridgeHead.1.9.1');

  line(g, 1684.5, 77, 1684.5, 966, '#000', 1.5);
  for (let p = 15750; p >= 14750; p -= 50) {
    if (p === 15350 || p === 15100) continue;
    const y = Math.round(505.5 + (15200 - p) * 0.73);
    line(g, 1685, y + 0.5, 1692, y + 0.5, '#000');
    label(g, 1695, y + 5, '1,' + p, 'axis-text');
  }
  [909, 963].forEach(y => { line(g, 1685, y + 0.5, 1692, y + 0.5, '#000'); label(g, 1694, y + 5, '0', 'axis-text'); });
  ['06:00', '08:00', '10:00', '12:00', '14:00', '16:00', '18:00', '20:00'].forEach((t, i) => {
    line(g, 963 + 100 * i, 967, 963 + 100 * i, 973, '#000');
    label(g, 963 + 100 * i, 986, t, 'axis-text', { 'text-anchor': 'middle' });
  });
  tag(g, 1686, 395, 60, '1,15352', '#ffa500', '#222');
  tag(g, 1686, 566, 60, '', '#ffa500', '#222');
  tag(g, 1686, 581, 60, '1,15095', '#000', '#fff');
  tag(g, 1686, 564, 60, '1,15120', '#0ff', '#222');
  tag(g, 1686, 644, 60, '1,15010', '#deb887', '#222');
  tag(g, 1686, 633, 60, '1,15025', '#ffc0cb', '#222');
  tag(g, 1686, 740, 60, '1,14878', '#ffa500', '#222');
  tag(g, 1686, 898, 40, '3719', '#000', '#fff');
  skip(g, 1647, 83);
  corner(g, 1743.5, 73.5);
})();
```
